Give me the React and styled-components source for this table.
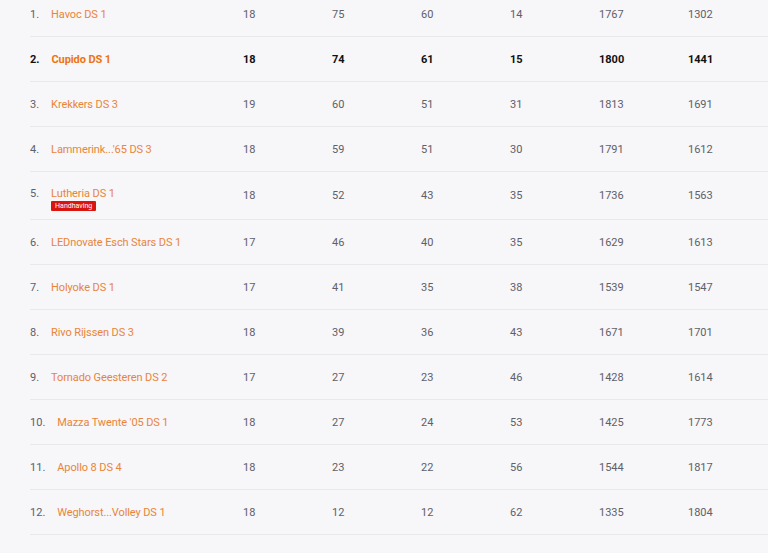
import React from 'react'
import styled, { createGlobalStyle } from 'styled-components'

const rows = [
  { rank: 1, name: 'Havoc DS 1', stats: [18, 75, 60, 14, 1767, 1302] },
  { rank: 2, name: 'Cupido DS 1', stats: [18, 74, 61, 15, 1800, 1441], own: true },
  { rank: 3, name: 'Krekkers DS 3', stats: [19, 60, 51, 31, 1813, 1691] },
  { rank: 4, name: 'Lammerink...\'65 DS 3', stats: [18, 59, 51, 30, 1791, 1612] },
  { rank: 5, name: 'Lutheria DS 1', stats: [18, 52, 43, 35, 1736, 1563], badge: 'Handhaving' },
  { rank: 6, name: 'LEDnovate Esch Stars DS 1', stats: [17, 46, 40, 35, 1629, 1613] },
  { rank: 7, name: 'Holyoke DS 1', stats: [17, 41, 35, 38, 1539, 1547] },
  { rank: 8, name: 'Rivo Rijssen DS 3', stats: [18, 39, 36, 43, 1671, 1701] },
  { rank: 9, name: 'Tornado Geesteren DS 2', stats: [17, 27, 23, 46, 1428, 1614] },
  { rank: 10, name: 'Mazza Twente \'05 DS 1', stats: [18, 27, 24, 53, 1425, 1773] },
  { rank: 11, name: 'Apollo 8 DS 4', stats: [18, 23, 22, 56, 1544, 1817] },
  { rank: 12, name: 'Weghorst...Volley DS 1', stats: [18, 12, 12, 62, 1335, 1804] },
]

const Global = createGlobalStyle`
  html, body {
    margin: 0;
    background: #f7f6f9;
    font-family: Roboto, "Liberation Sans", sans-serif;
    overflow: hidden;
  }
`

const Table = styled.div`
  margin-top: -8px;
  padding-left: 30px;
`

const Row = styled.div`
  display: grid;
  grid-template-columns: 213px repeat(6, 89px);
  align-items: center;
  height: ${({ tall }) => (tall ? 47 : 44)}px;
  border-bottom: 1px solid #e9e8ed;
  font-size: 11px;
  line-height: 13px;
  color: ${({ own }) => (own ? '#111' : '#606068')};
  font-weight: ${({ own }) => (own ? 700 : 400)};
`

const TeamCell = styled.div`
  display: flex;
  align-items: flex-start;
  gap: 12px;
  align-self: ${({ tall }) => (tall ? 'start' : 'center')};
  padding-top: ${({ tall }) => (tall ? 15 : 0)}px;
`

const Rank = styled.span`
  min-width: 7px;
`

const NameBlock = styled.div`
  display: flex;
  flex-direction: column;
  align-items: flex-start;
  gap: 1px;
`

const TeamName = styled.span`
  letter-spacing: -0.1px;
  color: ${({ own }) => (own ? '#ee7410' : '#e8853a')};
`

const Badge = styled.span`
  background: #d8150f;
  color: #fff;
  font-size: 7px;
  font-weight: 400;
  line-height: 10px;
  padding: 0 4px;
  border-radius: 1px;
`

const Stat = styled.div``

export default function App() {
  return (
    <>
      <Global />
      <Table>
        {rows.map((r) => (
          <Row key={r.rank} own={r.own} tall={!!r.badge}>
            <TeamCell tall={!!r.badge}>
              <Rank>{r.rank}.</Rank>
              <NameBlock>
                <TeamName own={r.own}>{r.name}</TeamName>
                {r.badge && <Badge>{r.badge}</Badge>}
              </NameBlock>
            </TeamCell>
            {r.stats.map((s, i) => (
              <Stat key={i}>{s}</Stat>
            ))}
          </Row>
        ))}
      </Table>
    </>
  )
}
